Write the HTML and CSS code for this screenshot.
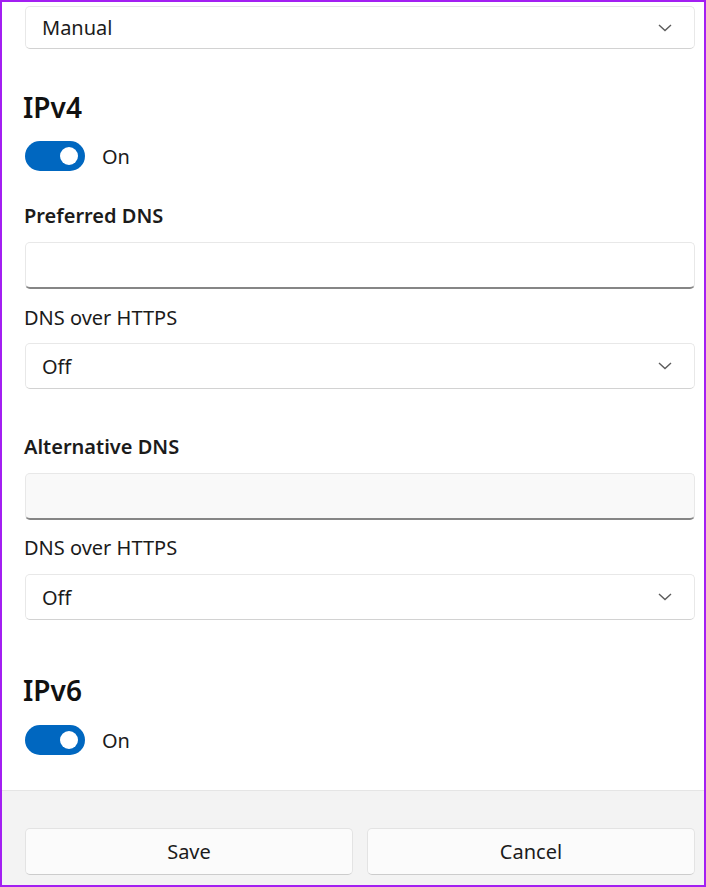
FILE: index.html
```html
<!DOCTYPE html>
<html>
<head>
<meta charset="utf-8">
<link rel="stylesheet" href="styles.css">
</head>
<body>
<div class="frame">
  <div class="main">
    <div class="select first"><span>Manual</span><svg class="chev" width="14" height="8" viewBox="0 0 14 8"><path d="M1 1 L7 6.5 L13 1" fill="none" stroke="#5c5c5c" stroke-width="1.4"/></svg></div>
    <h2 class="heading h4">IPv4</h2>
    <div class="toggle-row t4"><div class="toggle"><div class="knob"></div></div><span>On</span></div>
    <div class="label strong l1">Preferred DNS</div>
    <div class="input i1"></div>
    <div class="label l2">DNS over HTTPS</div>
    <div class="select s2"><span>Off</span><svg class="chev" width="14" height="8" viewBox="0 0 14 8"><path d="M1 1 L7 6.5 L13 1" fill="none" stroke="#5c5c5c" stroke-width="1.4"/></svg></div>
    <div class="label strong l3">Alternative DNS</div>
    <div class="input alt i2"></div>
    <div class="label l4">DNS over HTTPS</div>
    <div class="select s3"><span>Off</span><svg class="chev" width="14" height="8" viewBox="0 0 14 8"><path d="M1 1 L7 6.5 L13 1" fill="none" stroke="#5c5c5c" stroke-width="1.4"/></svg></div>
    <h2 class="heading h6">IPv6</h2>
    <div class="toggle-row t6"><div class="toggle"><div class="knob"></div></div><span>On</span></div>
  </div>
  <div class="footer">
    <button class="btn">Save</button>
    <button class="btn">Cancel</button>
  </div>
</div>
</body>
</html>
```
FILE: styles.css
```css
html, body {
  margin: 0;
  padding: 0;
  background: #ffffff;
}
.frame {
  width: 706px;
  height: 887px;
  box-sizing: border-box;
  border: 2px solid #a31ff2;
  display: flex;
  flex-direction: column;
  font-family: "Noto Sans", "Open Sans", sans-serif;
  color: #1b1b1b;
  background: #ffffff;
}
.main {
  flex: 1;
  padding: 0 9px 0 23px;
  display: flex;
  flex-direction: column;
}
.select {
  height: 46px;
  box-sizing: border-box;
  border: 1px solid #e8e8e8;
  border-bottom-color: #d2d2d2;
  border-radius: 5px;
  background: #ffffff;
  display: flex;
  align-items: center;
  justify-content: space-between;
  padding: 0 22px 0 16px;
  font-size: 20px;
}
.select.first {
  height: 43px;
  margin-top: 4px;
}
.chev {
  display: block;
}
.heading {
  margin: 0;
  font-size: 28px;
  line-height: 34px;
  font-weight: 600;
  color: #111;
  margin-left: -2px;
}
.h4 { margin-top: 41px; }
.h6 { margin-top: 53px; }
.toggle-row {
  display: flex;
  align-items: center;
  gap: 17px;
  font-size: 20px;
  height: 30px;
}
.t4 { margin-top: 17px; }
.t6 { margin-top: 18px; }
.toggle {
  width: 60px;
  height: 30px;
  border-radius: 15px;
  background: #0067c0;
  display: flex;
  align-items: center;
  justify-content: flex-end;
  padding-right: 7px;
  box-sizing: border-box;
}
.knob {
  width: 18px;
  height: 18px;
  border-radius: 50%;
  background: #ffffff;
}
.label {
  font-size: 20px;
  line-height: 24px;
  margin-left: -1px;
}
.label.strong {
  font-weight: 600;
}
.l1 { margin-top: 33px; }
.l2 { margin-top: 17px; }
.l3 { margin-top: 46px; }
.l4 { margin-top: 16px; }
.input {
  height: 47px;
  box-sizing: border-box;
  border: 1px solid #e8e8e8;
  border-bottom: 2px solid #868686;
  border-radius: 5px;
  background: #ffffff;
  margin-top: 14px;
}
.input.alt {
  background: #f9f9f9;
}
.s2 { margin-top: 13px; }
.s3 { margin-top: 14px; }
.footer {
  height: 95px;
  box-sizing: border-box;
  border-top: 1px solid #e5e5e5;
  background: #f3f3f3;
  display: grid;
  grid-template-columns: 1fr 1fr;
  gap: 14px;
  padding: 37px 9px 0 23px;
  align-items: start;
}
.btn {
  height: 47px;
  border: 1px solid #e3e3e3;
  border-bottom-color: #cccccc;
  border-radius: 5px;
  background: #fbfbfb;
  font-family: "Noto Sans", "Open Sans", sans-serif;
  font-size: 20px;
  color: #1b1b1b;
  padding: 0;
}
```
